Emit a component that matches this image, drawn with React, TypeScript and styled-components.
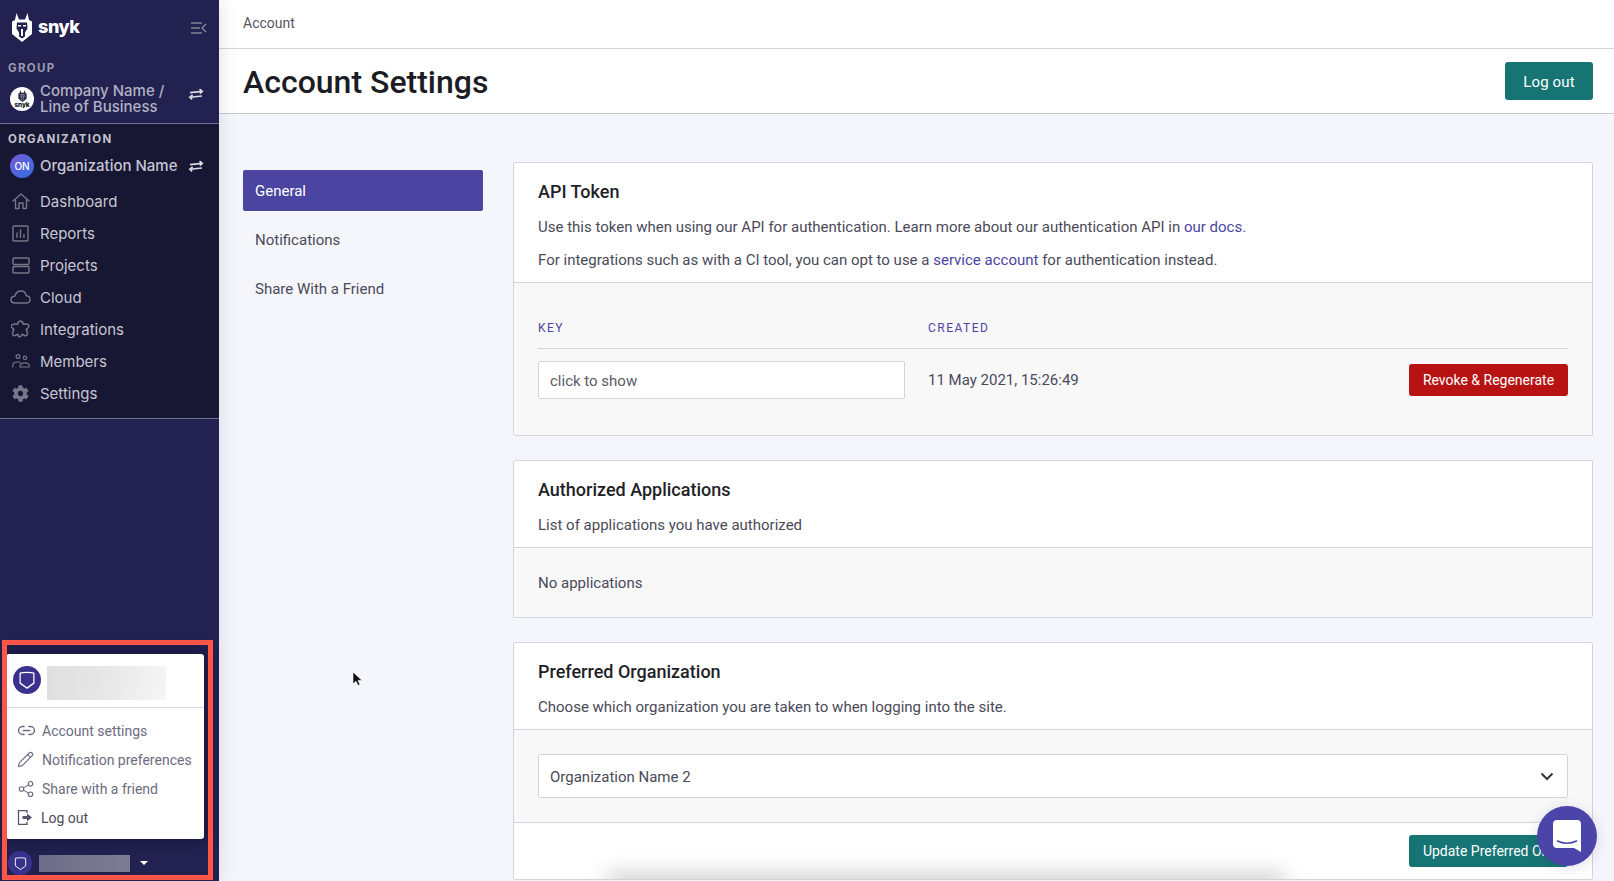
import React from "react";
import styled, { createGlobalStyle } from "styled-components";
import { FaCog } from "react-icons/fa";
import { Link2, Pencil, Share2 } from "lucide-react";

const Global = createGlobalStyle`
  html, body { margin: 0; padding: 0; height: 100%; overflow: hidden; }
  * { box-sizing: border-box; }
  body { font-family: Roboto, "Liberation Sans", sans-serif; background: #f5f6fb; }
`;

const Shell = styled.div`
  position: relative; display: flex; width: 1614px; height: 881px; overflow: hidden;
`;
const Sidebar = styled.aside`
  position: relative; z-index: 2; width: 219px; flex: none; height: 100%;
  display: flex; flex-direction: column; background: #22214f;
  font-family: Inter, "Liberation Sans", sans-serif;
  box-shadow: 0 0 18px rgba(30, 30, 70, 0.14);
`;
const GroupSection = styled.section`
  height: 124px; padding: 0 0 8px; border-bottom: 1px solid #6f6e8e;
`;
const OrgSection = styled.section`
  height: 295px; background: #171633; padding: 7px 0 9px; border-bottom: 1px solid #6f6e8e;
`;
const LogoRow = styled.div`
  height: 54px; padding: 12px 12px 0 12px; display: flex; align-items: flex-start; justify-content: space-between;
`;
const Brand = styled.div`display: flex; align-items: center; gap: 6px; height: 30px;`;
const BrandName = styled.span`
  color: #fff; font-weight: 800; font-size: 18px; line-height: 30px; letter-spacing: -0.4px;
`;
const CollapseBtn = styled.span`display: flex; margin-top: 10px;`;
const SectionLabel = styled.div<{ $bright?: boolean }>`
  padding-left: 8px; font-size: 11.5px; line-height: 16px; font-weight: 700; letter-spacing: 1.3px;
  color: ${(p) => (p.$bright ? "#c3c3d0" : "#9b9bae")};
  margin-top: ${(p) => (p.$bright ? "0" : "6px")};
`;
const SwitchRow = styled.div<{ $group?: boolean }>`
  display: flex; align-items: center; padding-left: 10px; margin-top: 7px;
  height: ${(p) => (p.$group ? "32px" : "24px")};
`;
const Avatar = styled.div`
  width: 24px; height: 24px; flex: none; border-radius: 50%; display: flex; align-items: center; justify-content: center;
  background: #fff; flex-direction: column; overflow: hidden;
`;
const OrgAvatar = styled(Avatar)`
  background: linear-gradient(135deg, #7a58d8, #2d70e0); color: #fff; font-size: 10px; font-weight: 500;
`;
const TinyBrand = styled.span`
  font-size: 6.5px; line-height: 6px; font-weight: 800; color: #111; letter-spacing: -0.1px;
`;
const SwitchName = styled.div<{ $bright?: boolean }>`
  flex: 1; margin-left: 6px; font-size: 15px; line-height: 15.5px; font-weight: 500;
  color: ${(p) => (p.$bright ? "#c5c5d3" : "#b1b1c4")}; white-space: nowrap;
  margin-bottom: ${(p) => (p.$bright ? "0" : "1px")};
`;
const SwapBox = styled.span<{ $raised?: boolean }>`
  display: flex; margin-right: 15px; margin-bottom: ${(p) => (p.$raised ? "10px" : "0")};
`;
const NavList = styled.nav`margin-top: 7px;`;
const NavRow = styled.div`
  height: 32px; display: flex; align-items: center; font-size: 15px; color: #c7c7d4;
`;
const NavIcon = styled.span`
  width: 40px; padding-left: 1px; flex: none; display: flex; justify-content: center; color: #777789;
  & > svg { display: block; }
`;
const UserRow = styled.div`
  margin-top: auto; height: 24px; margin-bottom: 6px; padding-left: 8px; display: flex; align-items: center;
`;
const ShieldBadge = styled.div<{ $size: number }>`
  width: ${(p) => p.$size}px; height: ${(p) => p.$size}px; flex: none; border-radius: 50%;
  background: #3a318d; display: flex; align-items: center; justify-content: center;
`;
const BlurName = styled.div`
  width: 91px; height: 17px; margin-left: 7px; background: linear-gradient(90deg, #6c6c88, #7d7d92);
`;
const Caret = styled.span`
  margin-left: 10px; width: 0; height: 0; border-left: 4.5px solid transparent; border-right: 4.5px solid transparent;
  border-top: 4px solid #fff;
`;
const Popup = styled.div`
  position: absolute; left: 6px; top: 654px; width: 198px; height: 185px; background: #fff; border-radius: 3px;
  box-shadow: 0 0 14px rgba(5, 5, 30, 0.55); font-family: Roboto, sans-serif; z-index: 1;
`;
const PopupHead = styled.div`
  height: 54px; border-bottom: 1px solid #d8d8de; display: flex; align-items: flex-start; padding: 12px 0 0 7px;
  margin-bottom: 8px;
`;
const PopupBlur = styled.div`
  width: 119px; height: 34px; margin-left: 6px; background: linear-gradient(100deg, #dfdfdf, #e6e6e6 45%, #f6f6f6);
  filter: blur(0.6px);
`;
const PopupItem = styled.div<{ $strong?: boolean }>`
  height: 29px; display: flex; align-items: center; font-size: 14px; padding-left: 11px;
  color: ${(p) => (p.$strong ? "#4c4b5e" : "#6c6b80")};
`;
const PopupIcon = styled.span<{ $narrow?: boolean }>`
  width: ${(p) => (p.$narrow ? "24px" : "25px")}; flex: none; display: flex; color: #6c6b80;
`;
const Annotation = styled.div`
  position: absolute; left: 2px; top: 640px; width: 211px; height: 240px; border: 5px solid #ff5549; z-index: 3; pointer-events: none;
`;

const Main = styled.main`
  flex: 1; min-width: 0; display: flex; flex-direction: column; color: #4a4a59;
`;
const Crumbs = styled.div`
  height: 49px; background: #fff; border-bottom: 1px solid #d3d3de; padding-left: 24px; display: flex; align-items: center;
  font-size: 14px; color: #555463; padding-bottom: 3px;
`;
const TitleBar = styled.header`
  height: 65px; background: #fff; border-bottom: 1px solid #c6c6cc; padding: 0 21px 0 24px;
  display: flex; align-items: center; justify-content: space-between;
`;
const Title = styled.h1`
  margin: 2px 0 0; font-size: 32px; line-height: 40px; font-weight: 500; color: #1c1c24;
`;
const Button = styled.button<{ $tone: "teal" | "red"; $large?: boolean }>`
  border: none; border-radius: 3px; color: #fff; font-family: inherit;
  padding: ${(p) => (p.$large ? "2px 0 0" : "0")};
  background: ${(p) => (p.$tone === "red" ? "#b71313" : "#167574")};
  font-size: ${(p) => (p.$large ? "15px" : "14px")};
  letter-spacing: ${(p) => (p.$large ? "0.15px" : "0")};
  height: ${(p) => (p.$large ? "38px" : "32px")};
  width: ${(p) => (p.$large ? "88px" : "159px")};
`;
const Content = styled.div`
  flex: 1; display: flex; align-items: flex-start; padding: 48px 21px 0 24px; gap: 30px;
`;
const SideMenu = styled.nav`
  width: 240px; flex: none; padding-top: 8px; display: flex; flex-direction: column; gap: 8px;
`;
const SideItem = styled.div<{ $active?: boolean }>`
  height: 41px; display: flex; align-items: center; padding-left: 12px; font-size: 15px; border-radius: 2px;
  background: ${(p) => (p.$active ? "#4b45a1" : "transparent")};
  color: ${(p) => (p.$active ? "#fff" : "#4a4a59")};
`;
const Cards = styled.div`flex: 1; min-width: 0; display: flex; flex-direction: column; gap: 24px;`;
const Card = styled.section`
  position: relative; background: #fff; border: 1px solid #d3d3de; border-radius: 2px; overflow: hidden;
`;
const CardHead = styled.div`padding: 15px 24px 10px;`;
const CardTitle = styled.h2`margin: 0; font-size: 18px; line-height: 28px; font-weight: 500; color: #1f1f28;`;
const Para = styled.p`margin: 9px 0 0; font-size: 15px; line-height: 24px; color: #4a4a59;`;
const A = styled.a`color: #4b45a1;`;
const CardBody = styled.div<{ $pad: string }>`
  background: #f8f8f9; border-top: 1px solid #d3d3de; padding: ${(p) => p.$pad}; font-size: 15px; line-height: 24px;
`;
const TokenGrid = styled.div`
  display: grid; grid-template-columns: 390px 1fr auto; align-items: center;
`;
const ColHead = styled.div`
  font-size: 12px; line-height: 16px; letter-spacing: 1.5px; color: #4b45a1; padding-bottom: 12px;
  border-bottom: 1px solid #d3d3de; margin-bottom: 12px;
`;
const KeyInput = styled.input`
  width: 367px; height: 38px; border: 1px solid #d3d3de; border-radius: 2px; background: #fff; padding: 1px 11px 0;
  font: 15px Roboto, sans-serif; color: #5a5a68; outline: none;
`;
const SelectBox = styled.div`
  height: 44px; border: 1px solid #d3d3de; border-radius: 2px; background: #fff; padding: 1px 13px 0 11px;
  display: flex; align-items: center; justify-content: space-between; color: #4a4a59;
`;
const Foot = styled.div`
  border-top: 1px solid #d3d3de; padding: 12px 24px; display: flex; justify-content: flex-end;
`;
const FootShadow = styled.div`
  position: absolute; left: 92px; bottom: -12px; width: 680px; height: 16px; background: rgba(100, 100, 100, 0.4);
  filter: blur(11px); border-radius: 8px; pointer-events: none;
`;
const ChatBubble = styled.div`
  position: absolute; left: 1537px; top: 806px; width: 60px; height: 60px; border-radius: 50%; background: #4b45a9;
  box-shadow: 0 2px 14px rgba(40, 40, 90, 0.14); display: flex; align-items: center; justify-content: center; z-index: 3;
`;
const Pointer = styled.svg`position: absolute; left: 352px; top: 671px; z-index: 3;`;

const Swap = () => (
  <svg width="16" height="12" viewBox="0 0 16 12" fill="none" stroke="#dcdce6" strokeWidth="1.6">
    <path d="M2 4.600 14 3.400M11.500 1.200l2.800 2.200-2.400 2.200" />
    <path d="M14 8 2 9.200M4.600 6.800 1.800 9.200 4.200 11.400" />
  </svg>
);
const Collapse = () => (
  <svg width="16" height="12" viewBox="0 0 16 12" fill="none" stroke="#7f7f96" strokeWidth="1.5">
    <path d="M0 1h11M0 6h9M0 11h11M15 2l-4 4 4 4" />
  </svg>
);
const Wolf = ({ w, h, fg, bg }: { w: number; h: number; fg: string; bg: string }) => (
  <svg width={w} height={h} viewBox="0 0 20 29">
    <path fill={fg} d="M4.500 0 7 6.500h6L15.500 0l1.500 7 3 1.500V21l-10 8-10-8V8.500L3 7z" />
    <path fill={bg} d="M5 9.500h10l.5 6-2.500 4v4L10 25.500 7 23.500v-4l-2.500-4z" />
    <path fill={fg} d="M6 12h3v1.500H6zM11 12h3v1.500h-3zM9 16h2v7H9z" />
  </svg>
);
const Shield = ({ size }: { size: number }) => (
  <svg width={size} height={size} viewBox="0 0 16 16" fill="none" stroke="#fff" strokeWidth="1">
    <path d="M2.500 2.500C5 1.700 11 1.700 13.500 2.500V10.500L8 14.500 2.500 10.500z" strokeLinejoin="round" />
  </svg>
);
const ic = { fill: "none", stroke: "currentColor", strokeWidth: 1.4, strokeLinejoin: "round" as const, strokeLinecap: "round" as const };
const HomeIcon = () => (
  <svg width="18" height="18" viewBox="0 0 18 18" {...ic}>
    <path d="M1 9 9 2l8 7M3.500 7.500V16.500H7V11h4v5.500h3.500V7.500" />
  </svg>
);
const ReportsIcon = () => (
  <svg width="17" height="17" viewBox="0 0 17 17" {...ic}>
    <rect x="1" y="1" width="15" height="15" rx="1" />
    <path d="M5 12.500V8M8.500 12.500V5M12 12.500v-3" />
  </svg>
);
const ProjectsIcon = () => (
  <svg width="18" height="17" viewBox="0 0 18 17" {...ic}>
    <rect x="1" y="1" width="16" height="6.500" rx="1" />
    <rect x="1" y="9.500" width="16" height="6.500" rx="1" />
  </svg>
);
const CloudIcon = () => (
  <svg width="21" height="14" viewBox="0 0 21 14" {...ic}>
    <path d="M5 13C2.500 13 1 11.500 1 9.500S2.500 6.200 4.800 6.200C5.600 3 8 1 10.800 1c3 0 5 2 5.500 4.800 2.300.2 3.700 1.600 3.700 3.600S18.300 13 16 13z" />
  </svg>
);
const PuzzleIcon = () => (
  <svg width="19" height="19" viewBox="0 0 18 18" {...ic}>
    <path d="M9 1c1.600 0 2.300 1.500 2.700 3 1.700-.3 4.800-.3 5.300 1.200.4 1.300-1.300 2.700-2.500 3.700.7 1.500 1.600 4.400.6 5.500-1 1-3.300 0-4.500-1-.6 1.300-1.800 2.600-2.800 2.600S7 14.700 6.500 13.400c-1.300 1-3.600 2-4.500 1-.9-1.100 0-4 .7-5.500C1.500 7.900-.2 6.500.2 5.200.7 3.700 4.500 3.700 6.100 4 6.600 2.500 7.400 1 9 1z" />
  </svg>
);
const MembersIcon = () => (
  <svg width="18" height="14" viewBox="0 0 18 14" fill="none" stroke="currentColor" strokeWidth="1.2" strokeLinecap="round">
    <circle cx="6" cy="2.500" r="1.900" />
    <circle cx="13" cy="3.800" r="1.700" />
    <path d="M.800 13V11.500C.800 9 3.500 8 6 8c.8 0 1.600.1 2.200.3M8 13h9.200v-1.200c0-2-2-3-4.200-3s-5 1-5 3.200z" />
  </svg>
);
const LogoutIcon = () => (
  <svg width="16" height="17" viewBox="0 0 16 16" fill="none">
    <path d="M10 3.500V1.200H1.500v13.600H10V12.500" stroke="#55546a" strokeWidth="1.300" />
    <path d="M5.500 6.500H10V4l5 4-5 4V9.500H5.500z" fill="#55546a" />
  </svg>
);

const NAV: [string, React.ReactNode][] = [
  ["Dashboard", <HomeIcon />],
  ["Reports", <ReportsIcon />],
  ["Projects", <ProjectsIcon />],
  ["Cloud", <CloudIcon />],
  ["Integrations", <PuzzleIcon />],
  ["Members", <MembersIcon />],
  ["Settings", <FaCog size={17} />],
];

export default function App() {
  return (
    <Shell>
      <Global />
      <Sidebar>
        <GroupSection>
          <LogoRow>
            <Brand>
              <Wolf w={20} h={29} fg="#fff" bg="#22214f" />
              <BrandName>snyk</BrandName>
            </Brand>
            <CollapseBtn><Collapse /></CollapseBtn>
          </LogoRow>
          <SectionLabel>GROUP</SectionLabel>
          <SwitchRow $group>
            <Avatar>
              <Wolf w={9} h={12} fg="#2a2a4a" bg="#77778f" />
              <TinyBrand>snyk</TinyBrand>
            </Avatar>
            <SwitchName>Company Name /<br />Line of Business</SwitchName>
            <SwapBox $raised><Swap /></SwapBox>
          </SwitchRow>
        </GroupSection>
        <OrgSection>
          <SectionLabel $bright>ORGANIZATION</SectionLabel>
          <SwitchRow>
            <OrgAvatar>ON</OrgAvatar>
            <SwitchName $bright>Organization Name</SwitchName>
            <SwapBox><Swap /></SwapBox>
          </SwitchRow>
          <NavList>
            {NAV.map(([label, icon]) => (
              <NavRow key={label}>
                <NavIcon>{icon}</NavIcon>
                {label}
              </NavRow>
            ))}
          </NavList>
        </OrgSection>
        <UserRow>
          <ShieldBadge $size={24}><Shield size={15} /></ShieldBadge>
          <BlurName />
          <Caret />
        </UserRow>
        <Popup>
          <PopupHead>
            <ShieldBadge $size={28}><Shield size={20} /></ShieldBadge>
            <PopupBlur />
          </PopupHead>
          <PopupItem><PopupIcon><Link2 size={19} strokeWidth={1.8} /></PopupIcon>Account settings</PopupItem>
          <PopupItem><PopupIcon><Pencil size={17} strokeWidth={1.6} /></PopupIcon>Notification preferences</PopupItem>
          <PopupItem><PopupIcon><Share2 size={18} strokeWidth={1.5} /></PopupIcon>Share with a friend</PopupItem>
          <PopupItem $strong><PopupIcon $narrow><LogoutIcon /></PopupIcon>Log out</PopupItem>
        </Popup>
        <Annotation />
      </Sidebar>
      <Main>
        <Crumbs>Account</Crumbs>
        <TitleBar>
          <Title>Account Settings</Title>
          <Button $tone="teal" $large>Log out</Button>
        </TitleBar>
        <Content>
          <SideMenu>
            <SideItem $active>General</SideItem>
            <SideItem>Notifications</SideItem>
            <SideItem>Share With a Friend</SideItem>
          </SideMenu>
          <Cards>
            <Card>
              <CardHead>
                <CardTitle>API Token</CardTitle>
                <Para>Use this token when using our API for authentication. Learn more about our authentication API in <A>our docs.</A></Para>
                <Para>For integrations such as with a CI tool, you can opt to use a <A>service account</A> for authentication instead.</Para>
              </CardHead>
              <CardBody $pad="37px 24px 36px">
                <TokenGrid>
                  <ColHead>KEY</ColHead>
                  <ColHead>CREATED</ColHead>
                  <ColHead>&nbsp;</ColHead>
                  <KeyInput readOnly defaultValue="click to show" />
                  <span>11 May 2021, 15:26:49</span>
                  <Button $tone="red">Revoke &amp; Regenerate</Button>
                </TokenGrid>
              </CardBody>
            </Card>
            <Card>
              <CardHead>
                <CardTitle>Authorized Applications</CardTitle>
                <Para>List of applications you have authorized</Para>
              </CardHead>
              <CardBody $pad="23px 24px 22px">No applications</CardBody>
            </Card>
            <Card>
              <CardHead>
                <CardTitle>Preferred Organization</CardTitle>
                <Para>Choose which organization you are taken to when logging into the site.</Para>
              </CardHead>
              <CardBody $pad="24px">
                <SelectBox>
                  Organization Name 2
                  <svg width="14" height="9" viewBox="0 0 14 9" fill="none" stroke="#33333d" strokeWidth="2"><path d="M1.500 1.500 7 7l5.500-5.500" /></svg>
                </SelectBox>
              </CardBody>
              <Foot><Button $tone="teal">Update Preferred Org</Button></Foot>
              <FootShadow />
            </Card>
          </Cards>
        </Content>
      </Main>
      <ChatBubble>
        <svg width="28" height="32" viewBox="0 0 28 32">
          <path fill="#fff" d="M4 0h20a4 4 0 0 1 4 4v28l-7-4H4a4 4 0 0 1-4-4V4a4 4 0 0 1 4-4z" />
          <path fill="none" stroke="#4b45a9" strokeWidth="1.600" strokeLinecap="round" d="M4.500 21c5.500 3 13.500 3 19 0" />
        </svg>
      </ChatBubble>
      <Pointer width="11" height="16" viewBox="0 0 11 16">
        <path d="M1 1v12l3-2.800 2 4.300 2-.9-2-4.200h4z" fill="#111" stroke="#fff" strokeWidth="0.600" />
      </Pointer>
    </Shell>
  );
}
